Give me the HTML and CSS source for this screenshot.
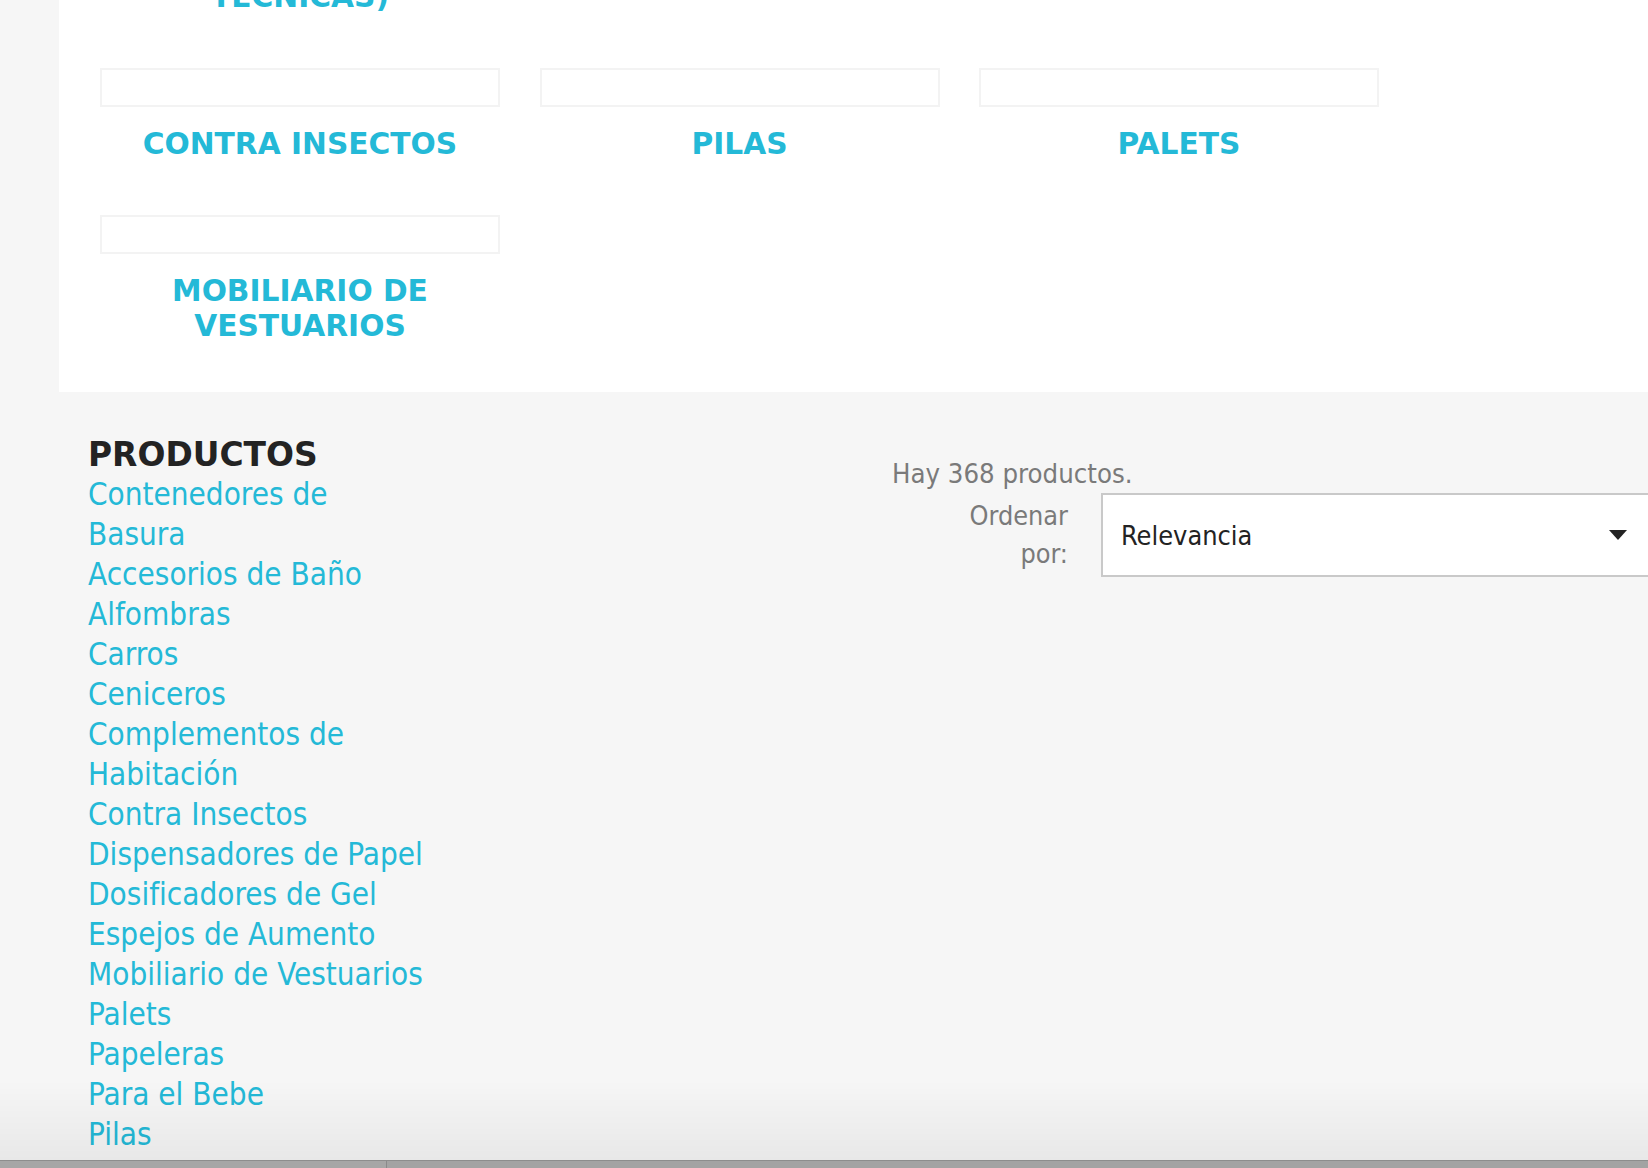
FILE: index.html
```html
<!DOCTYPE html>
<html lang="es">
<head>
<meta charset="utf-8">
<title>Productos</title>
<link rel="stylesheet" href="styles.css">
</head>
<body>
<div class="page">
  <section class="subcats">
    <div class="subcat-grid">
      <div class="subcat"><div class="thumb"></div><h5 class="subcat-name"><a href="#">SECAMANOS (FICHAS TECNICAS)</a></h5></div>
      <div class="subcat"><div class="thumb"></div></div>
      <div class="subcat"><div class="thumb"></div></div>
      <div class="subcat"><div class="thumb"></div><h5 class="subcat-name"><a href="#">CONTRA INSECTOS</a></h5></div>
      <div class="subcat"><div class="thumb"></div><h5 class="subcat-name"><a href="#">PILAS</a></h5></div>
      <div class="subcat"><div class="thumb"></div><h5 class="subcat-name"><a href="#">PALETS</a></h5></div>
      <div class="subcat"><div class="thumb"></div><h5 class="subcat-name"><a href="#">MOBILIARIO DE VESTUARIOS</a></h5></div>
    </div>
  </section>

  <section class="products-area">
    <aside class="left-col">
      <h4 class="block-title">PRODUCTOS</h4>
      <ul class="cat-list">
        <li><a href="#">Contenedores de Basura</a></li>
        <li><a href="#">Accesorios de Baño</a></li>
        <li><a href="#">Alfombras</a></li>
        <li><a href="#">Carros</a></li>
        <li><a href="#">Ceniceros</a></li>
        <li><a href="#">Complementos de Habitación</a></li>
        <li><a href="#">Contra Insectos</a></li>
        <li><a href="#">Dispensadores de Papel</a></li>
        <li><a href="#">Dosificadores de Gel</a></li>
        <li><a href="#">Espejos de Aumento</a></li>
        <li><a href="#">Mobiliario de Vestuarios</a></li>
        <li><a href="#">Palets</a></li>
        <li><a href="#">Papeleras</a></li>
        <li><a href="#">Para el Bebe</a></li>
        <li><a href="#">Pilas</a></li>
      </ul>
    </aside>
    <div class="right-col">
      <p class="total">Hay 368 productos.</p>
      <div class="sort-row">
        <span class="sort-label">Ordenar por:</span>
        <div class="sort-select">
          <span class="sort-value">Relevancia</span>
          <span class="caret"></span>
        </div>
      </div>
    </div>
  </section>
</div>
<div class="fade"></div>
<div class="hscroll"><div class="hscroll-thumb"></div></div>
</body>
</html>
```

FILE: styles.css
```css
html, body {
  margin: 0;
  padding: 0;
  overflow: hidden;
  background: #f6f6f6;
}
body {
  font-family: "DejaVu Sans Condensed", "DejaVu Sans", sans-serif;
  color: #7a7a7a;
}
a {
  color: #24b9d7;
  text-decoration: none;
}

.page {
  width: 1700px;
}

/* Sub-categories panel */
.subcats {
  margin-left: 59px;
  background: #ffffff;
  padding: 0 0 49.5px 41px;
}
.subcat-grid {
  display: grid;
  grid-template-columns: repeat(3, 400px);
  column-gap: 39.5px;
  row-gap: 54.5px;
  align-items: start;
  margin-top: -114px;
}
.thumb {
  height: 39px;
  box-sizing: border-box;
  border: 2px solid #f3f3f3;
  background: #fff;
}
.subcat-name {
  margin: 18.5px 0 0;
  text-align: center;
  font-family: "DejaVu Sans", sans-serif;
  font-weight: bold;
  font-size: 29.7px;
  line-height: 35px;
}

/* Products area */
.products-area {
  display: flex;
  padding: 43px 0 0 88px;
}
.left-col {
  width: 344px;
  flex: 0 0 344px;
}
.block-title {
  margin: 0;
  font-family: "DejaVu Sans", sans-serif;
  font-weight: bold;
  font-size: 32.9px;
  line-height: 39px;
  color: #232323;
}
.cat-list {
  list-style: none;
  margin: 0;
  padding: 0;
  font-size: 31.2px;
  line-height: 40px;
}

.right-col {
  margin-left: 460px;
  width: 758px;
  padding-top: 20px;
}
.total {
  margin: 0;
  font-size: 27.3px;
  line-height: 38px;
  color: #7a7a7a;
}
.sort-row {
  display: flex;
  align-items: center;
  gap: 33px;
}
.sort-label {
  flex: 0 0 176px;
  box-sizing: border-box;
  padding-left: 56px;
  text-align: right;
  font-size: 26.8px;
  line-height: 38px;
  color: #7a7a7a;
}
.sort-select {
  flex: 0 0 549px;
  box-sizing: border-box;
  height: 84px;
  border: 2px solid #c9c9c9;
  background: #fff;
  display: flex;
  align-items: center;
  justify-content: space-between;
  padding: 0 21px 0 18px;
  font-size: 26.9px;
  color: #232323;
}
.caret {
  width: 0;
  height: 0;
  border-left: 9.5px solid transparent;
  border-right: 9.5px solid transparent;
  border-top: 10px solid #232323;
}

/* Browser overlays at the bottom edge */
.fade {
  position: fixed;
  left: 0;
  right: 0;
  bottom: 8px;
  height: 80px;
  background: linear-gradient(rgba(0, 0, 0, 0), rgba(0, 0, 0, 0.055));
  pointer-events: none;
}
.hscroll {
  position: fixed;
  left: 0;
  right: 0;
  bottom: 0;
  height: 7px;
  background: #a3a3a3;
  border-top: 1px solid #8d8d8d;
}
.hscroll-thumb {
  width: 386px;
  height: 100%;
  border-right: 1px solid #8a8a8a;
  background: #a6a6a6;
}
```
